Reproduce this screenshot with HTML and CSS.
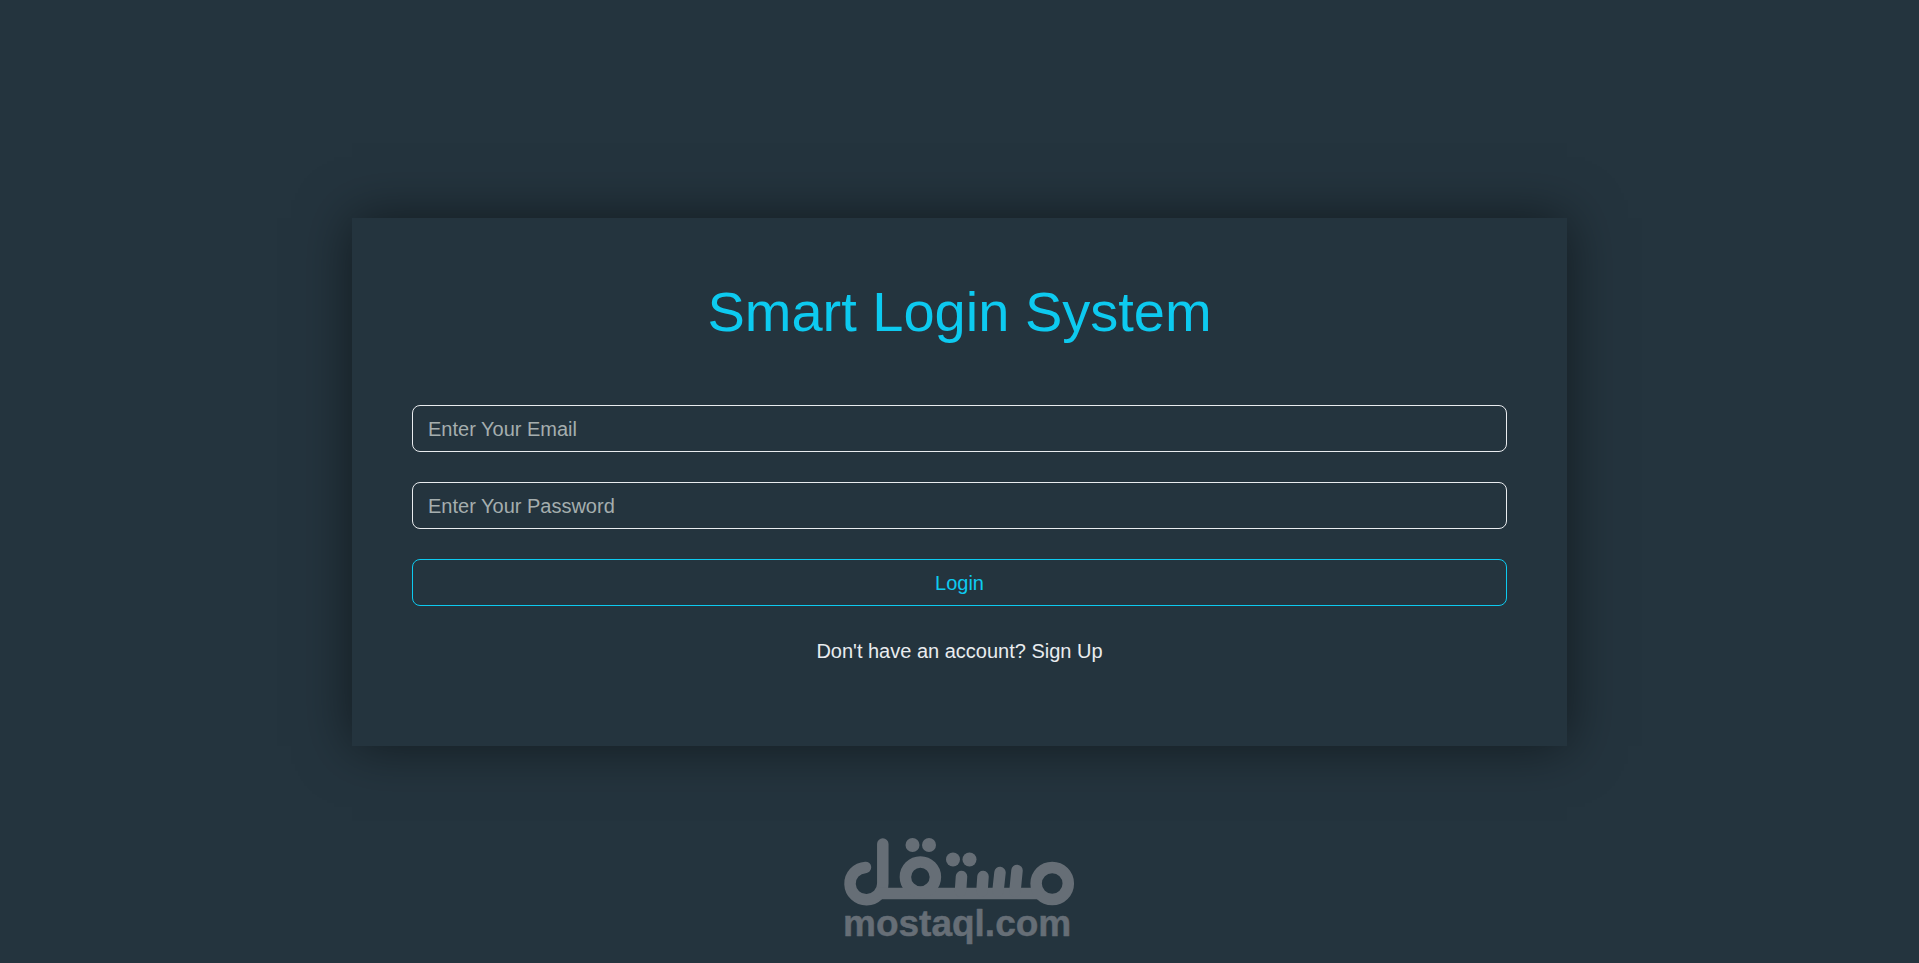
FILE: index.html
```
<!DOCTYPE html>
<html lang="en">

<head>
    <meta charset="UTF-8">
    <meta name="viewport" content="width=device-width, initial-scale=1.0">
    <title>Smart Login System</title>
    <link rel="stylesheet" href="styles.css">
</head>

<body>
    <main class="login">
        <h1 class="title">Smart Login System</h1>
        <form class="form">
            <input class="field" type="email" placeholder="Enter Your Email" aria-label="Email">
            <input class="field" type="password" placeholder="Enter Your Password" aria-label="Password">
            <button class="btn" type="button">Login</button>
        </form>
        <p class="signup">Don't have an account? <a href="#">Sign Up</a></p>
    </main>
    <footer class="footer">
        <svg class="logo" viewBox="10 12 239 108" role="img" aria-label="mostaql.com">
            <g fill="none" stroke="#666e76" stroke-width="11.5">
                <path stroke-linecap="round" d="M35.5 42.4A16.4 16.2 0 1 0 52.8 58.5V19" />
                <path d="M47 68.4H212" />
                <circle cx="90.4" cy="52" r="15" />
                <circle cx="222.2" cy="58.5" r="16.1" />
                <path stroke-linecap="round" d="M130.5 66L131.5 51.5M152 66L153 51.5M168 66L170 47.5M185 66L187 45.5" />
            </g>
            <g fill="#666e76">
                <circle cx="82.5" cy="20" r="7" />
                <circle cx="99" cy="20" r="7" />
                <circle cx="123" cy="34.5" r="7" />
                <circle cx="139.5" cy="34.5" r="7" />
            </g>
            <text class="logo-text" x="13" y="111">mostaql.com</text>
        </svg>
    </footer>
</body>

</html>
```
FILE: styles.css
```
* {
    padding: 0;
    margin: 0;
    box-sizing: border-box;
}

body {
    min-height: 100vh;
    display: grid;
    grid-template-rows: 1fr auto 1fr;
    justify-items: center;
    background-color: #24343e;
    color: #e9ecef;
    font-family: "Liberation Sans", Arial, sans-serif;
    font-size: 20px;
    line-height: 30px;
}

.login {
    grid-row: 2;
    width: 90%;
    max-width: 1215px;
    padding: 60px;
    text-align: center;
    box-shadow: 0 0 50px rgba(0, 0, 0, 0.5);
}

.title {
    margin-bottom: 60px;
    color: #0dcaf0;
    font-size: 56px;
    font-weight: 400;
    line-height: 67px;
}

.form {
    display: grid;
    gap: 30px;
    margin-bottom: 30px;
}

.field,
.btn {
    width: 100%;
    height: 47px;
    padding: 2px 15px 0;
    border: 1px solid #e9ecef;
    border-radius: 8px;
    background: transparent;
    color: #e9ecef;
    font: inherit;
}

.field::placeholder {
    color: #a5aeae;
    opacity: 1;
}

.btn {
    border-color: #0dcaf0;
    color: #0dcaf0;
    cursor: pointer;
}

.signup {
    padding-bottom: 20px;
}

.signup a {
    color: inherit;
    text-decoration: none;
}

.footer {
    grid-row: 3;
    align-self: end;
    padding-bottom: 18px;
}

.logo {
    display: block;
    width: 239px;
}

.logo-text {
    fill: #666e76;
    stroke: #666e76;
    stroke-width: 0.5;
    stroke-linejoin: round;
    font-size: 37px;
    font-weight: 700;
}
```
